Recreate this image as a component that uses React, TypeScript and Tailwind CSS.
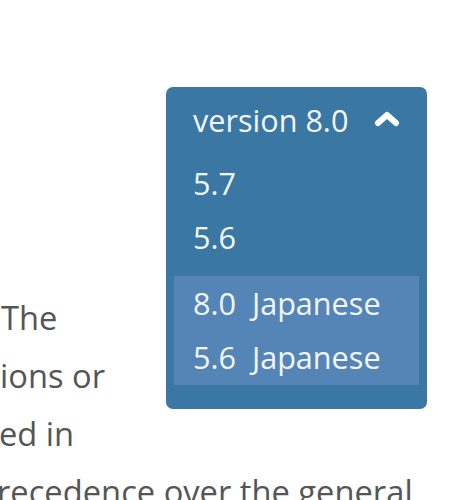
import React from 'react';

const font = { fontFamily: '"Open Sans", "Noto Sans", sans-serif' };

const VersionMenu: React.FC = () => {
    const versions = ['5.7', '5.6'];
    const localized = ['8.0', '5.6'];

    return (
        <div className="float-right mr-[30px] w-[261px] rounded-[7px] bg-[#3a77a3] pt-[6px] pb-[24px] text-[30.6px] leading-[54px] text-[#f2f6fa]">
            {/* Header */}
            <div className="flex items-center justify-between pl-[27px] pr-[27px]">
                <span>version 8.0</span>
                <svg width="26" height="16" viewBox="0 0 26 16" className="mt-[-2px]">
                    <polyline points="4,12 13,4 22,12" fill="none" stroke="#ffffff" strokeWidth="6" strokeLinecap="round" strokeLinejoin="round" />
                </svg>
            </div>

            {/* Versions */}
            <div className="mt-[9px] pl-[27px]">
                {versions.map((v) => (
                    <div key={v}>{v}</div>
                ))}
            </div>

            {/* Translations */}
            <div className="mx-[8px] mt-[12px] bg-[#5585b6] pb-[1px] pl-[19px]">
                {localized.map((v) => (
                    <div key={v} className="whitespace-pre">{v}  Japanese</div>
                ))}
            </div>
        </div>
    );
};

const App: React.FC = () => {
    return (
        <div className="h-[500px] w-[457px] overflow-hidden bg-white pt-[87px]" style={font}>
            <VersionMenu />
            <div className="h-[202px]" />
            <div className="text-[32.7px] leading-[58px] text-[#555555] whitespace-nowrap">
                <div className="ml-[1px]">The</div>
                <div className="ml-[0px]">ions or</div>
                <div className="ml-[-1px]">ed in</div>
                <div className="ml-[-3px]">recedence over the general</div>
            </div>
        </div>
    );
};

export default App;
